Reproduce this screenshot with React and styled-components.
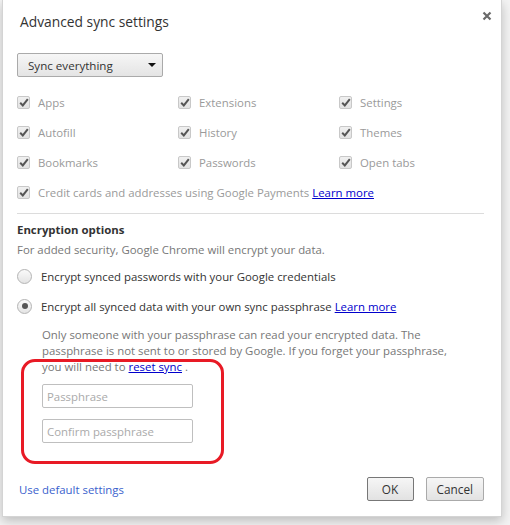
import React from 'react';
import styled, { createGlobalStyle } from 'styled-components';

const Global = createGlobalStyle`
  html, body { margin: 0; padding: 0; background: #f3f3f3; }
  body { font-family: "Open Sans", "Noto Sans", sans-serif; font-size: 11.4px; color: #333; }
  * { box-sizing: border-box; }
`;

const Page = styled.div`
  width: 510px;
  height: 525px;
  padding-left: 2px;
  overflow: hidden;
`;

const Dialog = styled.div`
  position: relative;
  width: 500px;
  height: 517px;
  background: #fff;
  border: 1px solid #d4d4d4;
  border-top: none;
  box-shadow: 0 4px 10px rgba(0, 0, 0, 0.22);
  padding: 12px 17px 15px 14px;
  display: flex;
  flex-direction: column;
`;

const Header = styled.div`
  display: flex;
  justify-content: space-between;
  align-items: flex-start;
  height: 20px;
`;

const Title = styled.h1`
  margin: 0 0 0 3px;
  font-size: 13.8px;
  font-weight: normal;
  line-height: 20px;
  color: #333;
`;

const Close = styled.button`
  border: none;
  background: none;
  padding: 0;
  margin: -1px -8px 0 0;
  width: 10px;
  height: 10px;
  display: flex;
`;

const Select = styled.div`
  margin-top: 21px;
  width: 146px;
  height: 24px;
  border: 1px solid #aaa;
  border-radius: 2px;
  background: linear-gradient(#f6f6f6, #e4e4e4);
  display: flex;
  align-items: center;
  justify-content: space-between;
  padding: 0 6px 0 10px;
  font-size: 11.6px;
  color: #333;
`;

const Arrow = styled.span`
  width: 0;
  height: 0;
  border-left: 4px solid transparent;
  border-right: 4px solid transparent;
  border-top: 4px solid #111;
`;

const Grid = styled.div`
  margin-top: 10px;
  display: grid;
  grid-template-columns: 161px 161px 1fr;
`;

const Row = styled.label`
  display: flex;
  align-items: center;
  height: 30px;
  grid-column: ${p => (p.$wide ? '1 / -1' : 'auto')};
  color: ${p => (p.$disabled ? '#9a9a9a' : '#333')};
  white-space: nowrap;
`;

const Box = styled.span`
  width: 13px;
  height: 13px;
  border: 1px solid #c8c8c8;
  border-radius: 2px;
  background: linear-gradient(#f0f0f0, #e2e2e2);
  margin: 0 8px 0 0;
  display: flex;
  align-items: center;
  justify-content: center;
`;

const Link = styled.a`
  color: #0000cc;
  text-decoration: underline;
  margin-left: ${p => (p.$tight ? '0' : '3px')};
`;

const Rule = styled.hr`
  margin: 6px 0 0 0;
  border: none;
  border-top: 1px solid #dcdcdc;
`;

const Heading = styled.div`
  margin-top: 6px;
  font-weight: bold;
  line-height: 20px;
  color: #333;
`;

const Desc = styled.div`
  line-height: 20px;
  color: #777;
`;

const RadioRow = styled.label`
  display: flex;
  align-items: center;
  height: 30px;
  color: #333;
  white-space: nowrap;
  margin-top: ${p => (p.$first ? '1px' : '0')};
`;

const Radio = styled.span`
  width: 15px;
  height: 15px;
  border-radius: 50%;
  border: 1px solid #b4b4b4;
  background: linear-gradient(#fafafa, #e4e4e4);
  margin-right: 9px;
  display: flex;
  align-items: center;
  justify-content: center;
  &::after {
    content: '';
    display: ${p => (p.$checked ? 'block' : 'none')};
    width: 6px;
    height: 6px;
    border-radius: 50%;
    background: #555;
  }
`;

const Indent = styled.div`
  padding-left: 25px;
  margin-top: 6px;
  display: flex;
  flex-direction: column;
`;

const Note = styled.p`
  margin: 0;
  max-width: 412px;
  line-height: 16px;
  color: #777;
`;

const Input = styled.input`
  width: 151px;
  height: 24px;
  border: 1px solid #bfbfbf;
  border-radius: 2px;
  padding: 0 4px;
  font: inherit;
  margin-top: ${p => p.$gap}px;
  &::placeholder { color: #aaa; }
`;

const Mark = styled.div`
  position: absolute;
  left: 18px;
  top: 359px;
  width: 203px;
  height: 105px;
  border: 3.5px solid #e81a25;
  border-radius: 14px;
  pointer-events: none;
`;

const Footer = styled.div`
  margin-top: auto;
  display: flex;
  align-items: center;
  padding-left: 2px;
`;

const Default = styled.a`
  color: #3a5fcd;
  text-decoration: none;
  margin-right: auto;
`;

const Button = styled.button`
  height: 24px;
  min-width: ${p => p.$w}px;
  margin-left: ${p => p.$ml || 0}px;
  border: 1px solid ${p => (p.$focus ? '#777' : '#aaa')};
  border-radius: 2px;
  background: linear-gradient(#f6f6f6, #e2e2e2);
  font: inherit;
  font-size: 11.8px;
  color: #333;
  padding: 0 10px;
`;

const Check = () => (
  <svg width="10" height="9" viewBox="0 0 10 9">
    <path d="M1.2 4.8 L3.8 7.4 L8.8 1.2" fill="none" stroke="#555" strokeWidth="2" />
  </svg>
);

const items = [
  'Apps', 'Extensions', 'Settings',
  'Autofill', 'History', 'Themes',
  'Bookmarks', 'Passwords', 'Open tabs',
];

export default function App() {
  return (
    <Page>
      <Global />
      <Dialog>
        <Header>
          <Title>Advanced sync settings</Title>
          <Close aria-label="close">
            <svg width="10" height="10" viewBox="0 0 10 10">
              <path d="M1.5 1.5 L8.5 8.5 M8.5 1.5 L1.5 8.5" stroke="#6a6a6a" strokeWidth="2.2" />
            </svg>
          </Close>
        </Header>
        <Select>
          Sync everything
          <Arrow />
        </Select>
        <Grid>
          {items.map(t => (
            <Row key={t} $disabled>
              <Box><Check /></Box>
              {t}
            </Row>
          ))}
          <Row $wide $disabled>
            <Box><Check /></Box>
            Credit cards and addresses using Google Payments
            <Link href="#">Learn more</Link>
          </Row>
        </Grid>
        <Rule />
        <Heading>Encryption options</Heading>
        <Desc>For added security, Google Chrome will encrypt your data.</Desc>
        <RadioRow $first>
          <Radio />
          Encrypt synced passwords with your Google credentials
        </RadioRow>
        <RadioRow>
          <Radio $checked />
          Encrypt all synced data with your own sync passphrase
          <Link href="#">Learn more</Link>
        </RadioRow>
        <Indent>
          <Note>
            Only someone with your passphrase can read your encrypted data. The passphrase is not
            sent to or stored by Google. If you forget your passphrase, you will need to{' '}
            <Link href="#" $tight>reset sync</Link> .
          </Note>
          <Input placeholder="Passphrase" $gap={9} />
          <Input placeholder="Confirm passphrase" $gap={11} />
        </Indent>
        <Footer>
          <Default href="#">Use default settings</Default>
          <Button $focus $w={47}>OK</Button>
          <Button $w={57} $ml={12}>Cancel</Button>
        </Footer>
        <Mark />
      </Dialog>
    </Page>
  );
}
